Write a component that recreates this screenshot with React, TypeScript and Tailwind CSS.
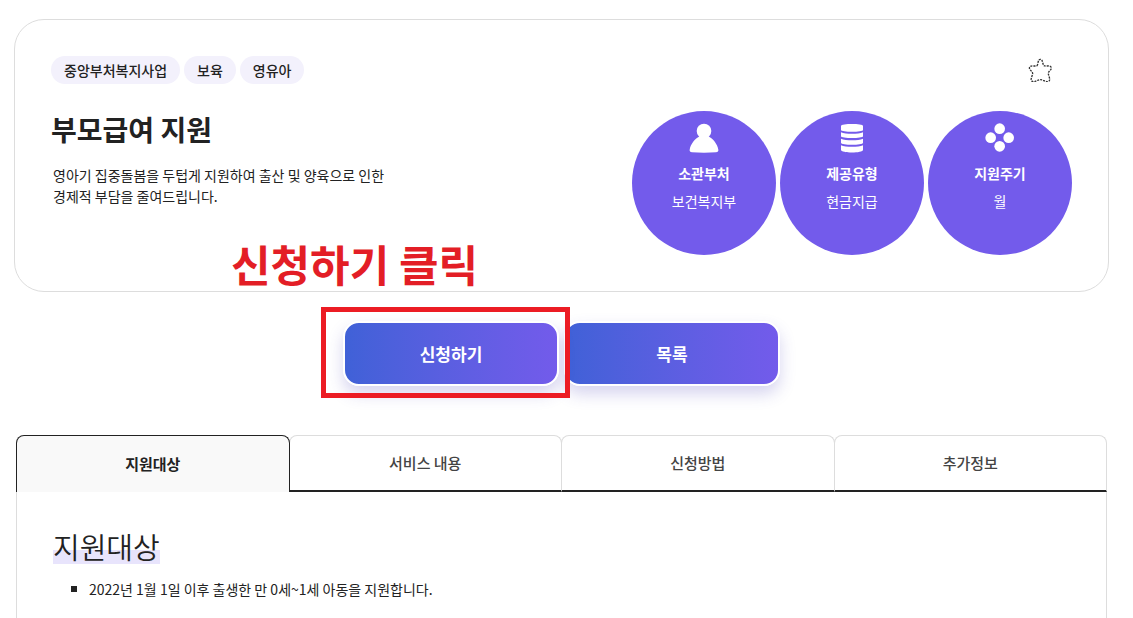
import { useState } from "react";
import type { ReactNode } from "react";
import clsx from "clsx";

const tags = ["중앙부처복지사업", "보육", "영유아"];

const tabs = ["지원대상", "서비스 내용", "신청방법", "추가정보"];

function StarIcon() {
  return (
    <svg viewBox="36 24 72 72" className="h-6 w-6" fill="none" aria-hidden="true">
      <path
        d="M63 47 C67 43 65 28 73 28 C81 28 79 43 84 47 C89 50 102 45 105 51 C109 60 96 63 97 71 C98 79 105 90 98 94 C90 98 82 89 73 89 C64 89 56 98 49 94 C41 90 49 79 50 71 C50 63 37 59 41 51 C45 45 57 50 63 47 Z"
        stroke="#333"
        strokeWidth="4"
        strokeDasharray="6 3"
      />
    </svg>
  );
}

function PersonIcon() {
  return (
    <svg viewBox="53 40 90 90" className="h-[30px] w-[30px]" fill="#fff" aria-hidden="true">
      <circle cx="98" cy="64" r="22" />
      <path d="M86 80 H110 C126 87 138 104 141 120 C142 125 139 127 134 128 C112 130 84 130 62 128 C57 127 54 125 55 120 C58 104 70 87 86 80 Z" />
    </svg>
  );
}

function CoinsIcon() {
  return (
    <svg viewBox="50 40 90 90" className="h-[30px] w-[30px]" fill="#fff" aria-hidden="true">
      <path d="M62 49 C62 41 128 41 128 49 V61 C128 68 62 68 62 61 Z" />
      <path d="M62 68 C76 74 114 74 128 68 V80 C128 87 62 87 62 80 Z" />
      <path d="M62 87 C76 93 114 93 128 87 V99 C128 107 62 107 62 99 Z" />
      <path d="M62 107 C76 113 114 113 128 107 V121 C128 131 62 131 62 121 Z" />
    </svg>
  );
}

function CycleIcon() {
  return (
    <svg viewBox="43 40 90 90" className="h-[30px] w-[30px]" fill="#fff" aria-hidden="true">
      <circle cx="87" cy="57" r="16" />
      <circle cx="60" cy="84" r="16" />
      <circle cx="114" cy="84" r="16" />
      <circle cx="87" cy="110" r="16" />
    </svg>
  );
}

function InfoCircle({ icon, label, value }: { icon: ReactNode; label: string; value: string }) {
  return (
    <li className="flex h-36 w-36 shrink-0 flex-col items-center rounded-full bg-[#735beb] pt-3 text-sm text-white">
      {icon}
      <strong className="mt-2 leading-6 font-bold">{label}</strong>
      <span className="mt-1 leading-6">{value}</span>
    </li>
  );
}

function ActionButton({ children }: { children: ReactNode }) {
  return (
    <button
      type="button"
      className="h-[65px] w-[216px] rounded-2xl border-2 border-white bg-linear-to-r from-[#3f61d7] to-[#735beb] bg-origin-border text-[17px] font-bold text-white shadow-[0_8px_16px_rgba(70,60,180,0.22)]"
    >
      {children}
    </button>
  );
}

export default function App() {
  const [active, setActive] = useState(0);

  return (
    <div className="flex min-h-screen flex-col bg-white pt-[19px] pr-6 pl-[14px] font-['Noto_Sans_CJK_KR',sans-serif] text-[#222]">
      <section className="rounded-[30px] border border-[#ddd] p-9">
        <div className="flex items-center justify-between">
          <ul className="flex gap-1">
            {tags.map((tag) => (
              <li key={tag} className="rounded-full bg-[#f3f1fc] px-[13px] text-sm leading-7 font-medium">
                {tag}
              </li>
            ))}
          </ul>
          <button type="button" aria-label="관심 서비스" className="mr-5">
            <StarIcon />
          </button>
        </div>

        <div className="mt-[27px] flex justify-between">
          <div>
            <h1 className="text-[28px] leading-9 font-bold">부모급여 지원</h1>
            <p className="mt-[18px] pl-[2px] text-sm leading-[21px]">
              영아기 집중돌봄을 두텁게 지원하여 출산 및 양육으로 인한
              <br />
              경제적 부담을 줄여드립니다.
            </p>
          </div>
          <ul className="flex gap-1">
            <InfoCircle icon={<PersonIcon />} label="소관부처" value="보건복지부" />
            <InfoCircle icon={<CoinsIcon />} label="제공유형" value="현금지급" />
            <InfoCircle icon={<CycleIcon />} label="지원주기" value="월" />
          </ul>
        </div>
      </section>

      <div className="mt-[29px] flex justify-center gap-[5px]">
        <div className="relative z-10">
          <ActionButton>신청하기</ActionButton>
          <div className="pointer-events-none absolute -top-[14px] -right-[11px] -bottom-3 -left-[22px] border-5 border-[#ec1c24]" />
          <p className="pointer-events-none absolute bottom-full -left-28 mb-[30px] text-[43px] leading-[56px] font-bold whitespace-nowrap text-[#e31e26]">
            신청하기 클릭
          </p>
        </div>
        <ActionButton>목록</ActionButton>
      </div>

      <div className="mt-[49px] flex flex-1 flex-col px-[2px]">
        <div role="tablist" className="flex">
          {tabs.map((tab, i) => (
            <button
              key={tab}
              type="button"
              role="tab"
              id={`tab-${i}`}
              aria-selected={active === i}
              aria-controls="tab-panel"
              onClick={() => setActive(i)}
              className={clsx(
                "h-[57px] flex-1 rounded-t-lg border text-[15px]",
                i > 0 && "-ml-px",
                active === i
                  ? "relative border-[#222] border-b-0 bg-[#f9f9f9] font-bold"
                  : "border-[#ddd] border-b-2 border-b-[#222] font-medium text-[#444]"
              )}
            >
              {tab}
            </button>
          ))}
        </div>
        <div
          role="tabpanel"
          id="tab-panel"
          aria-labelledby={`tab-${active}`}
          className="flex-1 border-x border-[#ddd] px-9 pt-9"
        >
          <h2 className="inline-block bg-linear-to-b from-transparent from-60% to-[#e8e4fc] to-60% text-[29px] leading-9 font-[350]">
            지원대상
          </h2>
          <ul className="mt-[13px] pl-[18px]">
            <li className="flex items-center gap-3 text-sm leading-6">
              <span className="h-[6px] w-[6px] bg-[#222]" />
              2022년 1월 1일 이후 출생한 만 0세~1세 아동을 지원합니다.
            </li>
          </ul>
        </div>
      </div>
    </div>
  );
}
